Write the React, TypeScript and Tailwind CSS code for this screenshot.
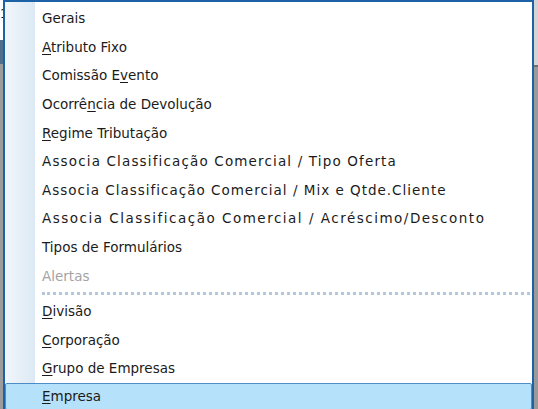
const items: { label: string; u?: number; disabled?: boolean; track?: string }[] = [
  { label: "Gerais" },
  { label: "Atributo Fixo", u: 0 },
  { label: "Comissão Evento", u: 10 },
  { label: "Ocorrência de Devolução", u: 6 },
  { label: "Regime Tributação", u: 0 },
  { label: "Associa Classificação Comercial / Tipo Oferta", track: "tracking-[1.15px]" },
  { label: "Associa Classificação Comercial / Mix e Qtde.Cliente", track: "tracking-[1px]" },
  { label: "Associa Classificação Comercial / Acréscimo/Desconto", track: "tracking-[1.5px]" },
  { label: "Tipos de Formulários" },
  { label: "Alertas", disabled: true },
];

const lower: { label: string; u?: number; active?: boolean }[] = [
  { label: "Divisão", u: 0 },
  { label: "Corporação", u: 0 },
  { label: "Grupo de Empresas", u: 0 },
  { label: "Empresa", u: 0, active: true },
];

const Label = ({ label, u }: { label: string; u?: number }) => {
  if (u === undefined) return <span>{label}</span>;
  return (
    <span>
      {label.slice(0, u)}
      <span className="underline underline-offset-2">{label[u]}</span>
      {label.slice(u + 1)}
    </span>
  );
};

export default function App() {
  return (
    <div
      className="flex h-[409px] w-[538px] overflow-hidden bg-[#a3a3a3] text-[13.5px]"
      style={{ fontFamily: "Tahoma, 'DejaVu Sans', Verdana, sans-serif" }}
    >
      {/* left sliver of the window behind */}
      <div className="flex w-[3px] flex-col">
        <div className="h-[40px] bg-white text-[12px] leading-[28px] text-black">1</div>
        <div className="h-[24px] bg-[#4f6f8a]"></div>
        <div className="flex-1 bg-[#9c9c9c]"></div>
      </div>

      {/* popup menu */}
      <div className="relative flex w-[532px] flex-col border-l-2 border-r-2 border-t-2 border-[#1d62a6] bg-white">
        <div className="absolute bottom-0 left-0 top-0 w-[31px] border-r border-white bg-gradient-to-r from-[#f1f6fb] to-[#dce9f4]"></div>
        <div className="relative flex flex-col pt-[2px]">
          {items.map((it) => (
            <div
              key={it.label}
              className={`flex h-[28.6px] items-center pl-[37px] ${it.track ?? ""} ${it.disabled ? "text-[#a3a3a3]" : "text-[#1b1b1b]"}`}
            >
              <Label label={it.label} u={it.u} />
            </div>
          ))}
          <div className="ml-[37px] mr-[2px] flex h-[7px] items-center">
            <div className="h-[3px] w-full border-t-[3px] border-dotted border-[#b4c8dc]"></div>
          </div>
          {lower.map((it) =>
            it.active ? (
              <div
                key={it.label}
                className="flex h-[27px] items-center rounded-[2px] border border-[#4d8cc4] bg-[#b6e1fa] pl-[36px] text-[#1b1b1b]"
              >
                <Label label={it.label} u={it.u} />
              </div>
            ) : (
              <div key={it.label} className="flex h-[28.6px] items-center pl-[37px] text-[#1b1b1b]">
                <Label label={it.label} u={it.u} />
              </div>
            )
          )}
        </div>
      </div>

      {/* right sliver of the window behind */}
      <div className="flex w-[4px] flex-col">
        <div className="h-[65px] bg-[#d4d4d4]"></div>
        <div className="h-[2px] bg-[#707070]"></div>
        <div className="flex-1 bg-[#9a9a9a]"></div>
      </div>
    </div>
  );
}
